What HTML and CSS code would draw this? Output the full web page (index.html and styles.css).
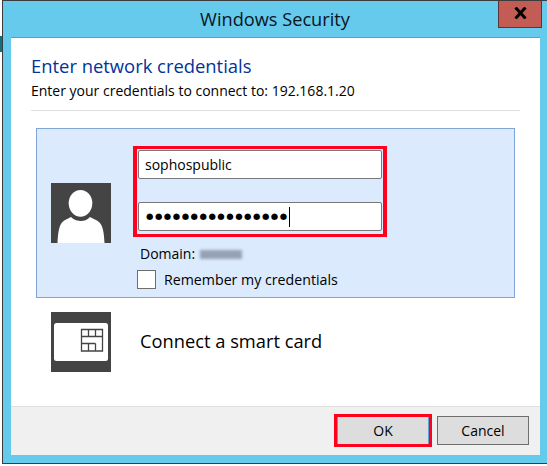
FILE: index.html
```html
<!doctype html>
<html>
<head>
<meta charset="utf-8">
<title>Windows Security</title>
<link rel="stylesheet" href="styles.css">
</head>
<body>
<div class="window">
	<div class="titlebar">
		<div class="title">Windows Security</div>
		<div class="closeButton">
			<svg width="13" height="12" viewBox="0 0 13 12"><path d="M1.5 0.5 L11.5 11.5 M11.5 0.5 L1.5 11.5" stroke="#000" stroke-width="3" fill="none"/></svg>
		</div>
	</div>
	<div class="client">
		<div class="content">
			<div class="heading">Enter network credentials</div>
			<div class="subheading">Enter your credentials to connect to: 192.168.1.20</div>
			<div class="rule"></div>
			<div class="credentialPanel">
				<div class="tile">
					<svg width="60" height="60" viewBox="0 0 60 60">
						<rect width="60" height="60" fill="#444"/>
						<ellipse cx="29.5" cy="20.3" rx="11.8" ry="13.4" fill="#fff"/>
						<path d="M6.5 60 C7 50 8 43 11 39.5 C13 37 17 36 20 34 C23 37 27 38 30 38 C33 38 36 37 39 34 C42 36 46 37 48.5 39.5 C52 43 53 50 53.5 60 Z" fill="#fff"/>
					</svg>
				</div>
				<div class="fields">
					<div class="highlightBox">
						<div class="textField">sophospublic</div>
						<div class="textField passwordField">●●●●●●●●●●●●●●●●<span class="caret"></span></div>
					</div>
					<div class="domain">Domain:<span class="blurred"></span></div>
					<div class="remember"><span class="checkbox"></span>Remember my credentials</div>
				</div>
			</div>
			<div class="smartCardRow">
				<div class="tile">
					<svg width="60" height="60" viewBox="0 0 60 60">
						<rect width="60" height="60" fill="#444"/>
						<rect x="3" y="11" width="54" height="38" rx="2.5" fill="#fff"/>
						<path d="M30.5 17.5 H51.5 V39 H30.5 Z M30.5 24.5 H51.5 M37.5 17.5 V24.5 M44.5 17.5 V24.5 M30.5 31.5 H44.5 M44.5 31.5 V39 M37.5 31.5 V39" fill="none" stroke="#444" stroke-width="1.3"/>
					</svg>
				</div>
				<div class="smartCardLabel">Connect a smart card</div>
			</div>
		</div>
		<div class="footer">
			<div class="okHighlight"><div class="button">OK</div></div>
			<div class="button cancelButton">Cancel</div>
		</div>
	</div>
</div>
</body>
</html>
```

FILE: styles.css
```css
html, body {
	margin: 0;
	padding: 0;
}

body {
	width: 547px;
	height: 466px;
	overflow: hidden;
	background-color: rgb(255,255,255);
	background-image: linear-gradient(rgb(20,110,130), rgb(20,110,130));
	background-size: 2px 16px;
	background-position: 0px 36px;
	background-repeat: no-repeat;
	font-family: "Open Sans", "Noto Sans", sans-serif;
	color: rgb(0,0,0);
}

.window {
	box-sizing: border-box;
	margin-left: 2px;
	width: 545px;
	height: 464px;
	background-color: rgb(101,202,235);
	border-left: 1px solid rgb(60,60,60);
	border-top: 1px solid rgb(60,60,60);
	border-bottom: 1px solid rgb(60,60,60);
	display: flex;
	flex-direction: column;
}

.titlebar {
	height: 36px;
	flex: none;
	position: relative;
	display: flex;
	justify-content: center;
}

.title {
	margin-top: 5px;
	font-size: 18.2px;
	line-height: 27px;
	color: rgb(10,20,30);
}

.closeButton {
	position: absolute;
	top: 0px;
	right: 5px;
	box-sizing: border-box;
	width: 44px;
	height: 27px;
	background-color: rgb(194,92,84);
	border: 1px solid rgb(90,55,55);
	border-top: none;
	display: flex;
	align-items: center;
	justify-content: center;
	padding-bottom: 3px;
}

.client {
	margin-left: 8px;
	width: 529px;
	height: 418px;
	background-color: rgb(255,255,255);
	border-top: 1px solid rgb(125,150,165);
	box-sizing: border-box;
	display: flex;
	flex-direction: column;
}

.content {
	flex: 1;
	padding: 15px 20px 0px 20px;
}

.heading {
	font-size: 18.4px;
	line-height: 26px;
	color: rgb(0,51,153);
}

.subheading {
	font-size: 14px;
	line-height: 20px;
	margin-top: 2px;
}

.rule {
	margin-top: 9px;
	width: 489px;
	height: 1px;
	background-color: rgb(223,223,223);
}

.credentialPanel {
	box-sizing: border-box;
	margin-top: 17px;
	margin-left: 5px;
	width: 479px;
	height: 170px;
	background-color: rgb(220,234,253);
	border: 1px solid rgb(130,165,215);
	display: flex;
	align-items: flex-start;
	padding: 17px 0px 0px 14px;
}

.tile {
	width: 60px;
	height: 60px;
	flex: none;
}

.credentialPanel .tile {
	margin-top: 37px;
}

.tile svg {
	display: block;
}

.fields {
	margin-left: 22px;
}

.highlightBox {
	box-sizing: border-box;
	width: 254px;
	height: 91px;
	border-style: solid;
	border-width: 3px 4px;
	border-color: rgb(255,0,30);
	padding-top: 1px;
	display: flex;
	flex-direction: column;
	gap: 23px;
}

.textField {
	box-sizing: border-box;
	width: 244px;
	height: 29px;
	margin-left: 1px;
	background-color: rgb(255,255,255);
	border: 1px solid rgb(120,120,120);
	border-radius: 2px;
	font-size: 14px;
	line-height: 27px;
	padding-left: 6px;
	white-space: nowrap;
}

.passwordField {
	font-family: "DejaVu Sans", sans-serif;
	font-size: 8.5px;
	letter-spacing: 1.5px;
	padding-left: 7px;
	display: flex;
	align-items: center;
}

.caret {
	display: inline-block;
	width: 1px;
	height: 20px;
	background-color: rgb(0,0,0);
}

.domain {
	margin-top: 7px;
	margin-left: 7px;
	font-size: 14px;
	line-height: 20px;
	display: flex;
	align-items: center;
}

.blurred {
	display: inline-block;
	margin-left: 5px;
	width: 42px;
	height: 9px;
	background-color: rgb(150,160,182);
	filter: blur(1.5px);
}

.remember {
	margin-top: 6px;
	margin-left: 4px;
	font-size: 14.2px;
	line-height: 19px;
	display: flex;
	align-items: center;
}

.checkbox {
	box-sizing: border-box;
	width: 19px;
	height: 19px;
	background-color: rgb(255,255,255);
	border: 1px solid rgb(110,110,110);
	margin-right: 8px;
}

.smartCardRow {
	margin-top: 14px;
	margin-left: 20px;
	display: flex;
	align-items: center;
}

.smartCardLabel {
	margin-left: 29px;
	margin-bottom: 4px;
	font-size: 18.3px;
}

.footer {
	height: 49px;
	flex: none;
	box-sizing: border-box;
	background-color: rgb(240,240,240);
	border-top: 1px solid rgb(223,223,223);
	display: flex;
	align-items: center;
	justify-content: flex-end;
	padding: 0px 11px 1px 0px;
}

.okHighlight {
	box-sizing: border-box;
	width: 98px;
	height: 33px;
	border: 3px solid rgb(255,0,30);
	margin-right: 5px;
}

.button {
	box-sizing: border-box;
	height: 100%;
	background-color: rgb(221,221,221);
	border: 1px solid rgb(110,110,110);
	font-size: 14px;
	display: flex;
	align-items: center;
	justify-content: center;
}

.okHighlight .button {
	border-color: rgb(90,160,215);
	border-width: 0px 1px 0px 1px;
}

.cancelButton {
	width: 92px;
	height: 29px;
}
```
